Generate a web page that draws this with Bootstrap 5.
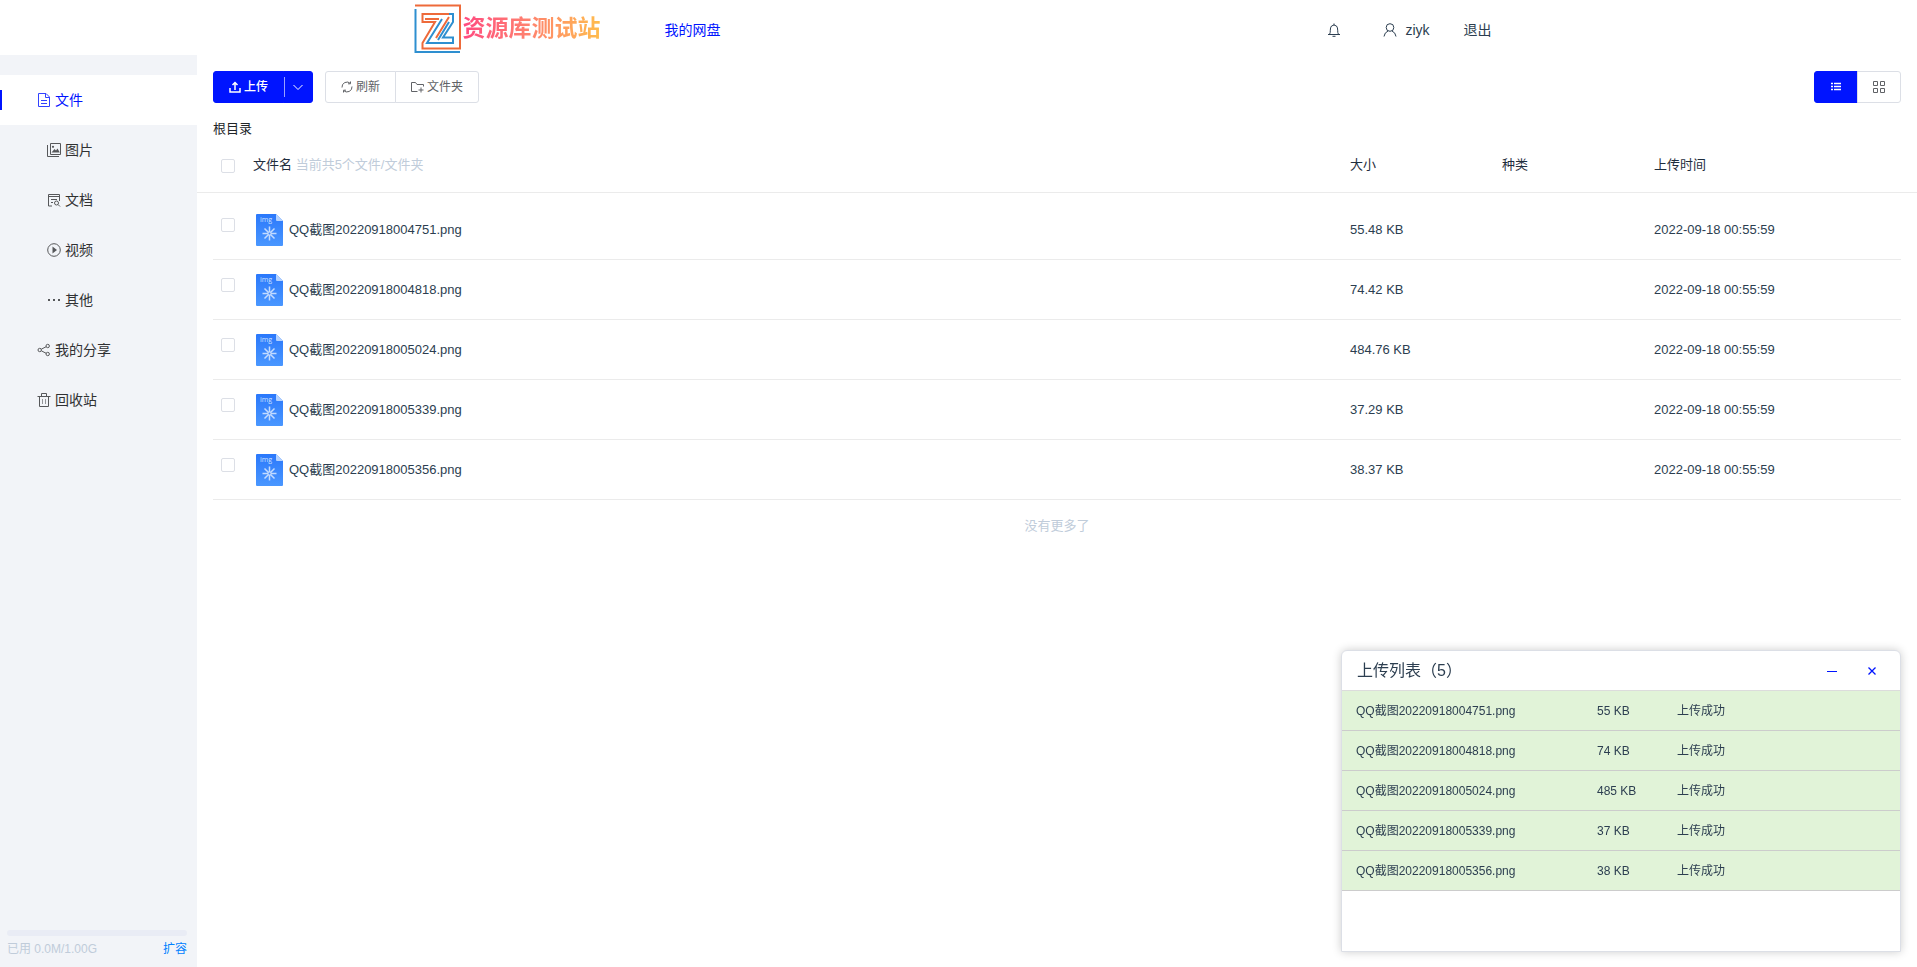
<!DOCTYPE html>
<html lang="zh-CN">
<head>
<meta charset="utf-8">
<meta name="viewport" content="width=device-width, initial-scale=1">
<title>我的网盘</title>
<link href="https://cdn.jsdelivr.net/npm/bootstrap@5.3.0/dist/css/bootstrap.min.css" rel="stylesheet">
<style>
  body { font-family: "Liberation Sans", "Noto Sans CJK SC", sans-serif; font-size: 13px; line-height: 20px; color: #2c3e50; background: #fff; }
  a { color: inherit; text-decoration: none; }
  svg { display: block; flex: none; fill: none; stroke: currentColor; }
  .topbar { height: 55px; }
  .topbar-inner { width: 100%; max-width: 1090px; font-size: 14px; }
  .brand-text { font-size: 23px; line-height: 32px; font-weight: 700; background: linear-gradient(90deg, #ff4a80, #ff7f70 45%, #ffbd4d); -webkit-background-clip: text; background-clip: text; color: transparent; }
  .accent { color: #0014ff; }
  .user-nav { gap: 34px; }
  .sidebar { width: 197px; background: #f2f4f8; flex: none; }
  .side-nav { padding-top: 20px; }
  .side-link { height: 50px; font-size: 14px; color: #303133; padding-left: 37px; gap: 4px; }
  .side-link svg { opacity: .8; }
  .side-link.sub { padding-left: 47px; }
  .side-link.active { background: #fff; color: #0014ff; position: relative; }
  .side-link.active::before { content: ""; position: absolute; left: 0; top: 15px; width: 2px; height: 20px; background: #0014ff; }
  .quota { padding: 0 10px 8px 7px; font-size: 12px; color: #c0ccda; }
  .quota .progress { height: 6px; background: #e9ecf5; margin-bottom: 3px; }
  .quota a { color: #0080ff; }
  .main { padding: 16px; min-width: 0; }
  .btn { font-size: 12px; line-height: 18px; border-radius: 3px; padding: 6px 15px; gap: 3px; }
  .btn-fill { background: #0014ff; color: #fff; border-color: #0014ff; font-weight: 500; }
  .btn-line { border-color: #dcdfe6; color: #606266; background: #fff; }
  .btn-split { position: relative; padding: 6px 9px; }
  .btn-split::before { content: ""; position: absolute; left: 0; top: 5px; bottom: 5px; width: 1px; background: #ffffff99; }
  .view-btn { width: 44px; height: 32px; padding: 0; }
  .crumb { font-size: 13px; color: #212529; margin-top: 16px; }
  .files { --bs-table-bg: transparent; color: #2c3e50; margin: 0; table-layout: fixed; border-collapse: separate; border-spacing: 0; }
  .files th { position: relative; font-weight: 400; color: #1f2d3d; border: 0; padding: 16px 0 18px; vertical-align: top; }
  .files th::after { content: ""; position: absolute; left: -16px; right: -16px; bottom: 0; height: 1px; background: #ebebeb; }
  .files td { height: 60px; padding: 0; vertical-align: middle; border-bottom: 1px solid #ebebeb; }
  .files tbody tr:first-child td { height: 67px; padding-top: 7px; }
  .files .form-check-input { width: 14px; height: 14px; border: 1px solid #dcdfe6; border-radius: 2px; margin: 4px 0 0 8px; display: block; }
  .files td .form-check-input { margin: 0 0 9px 8px; }
  .file-icon { width: 27px; height: 32px; margin: 0 6px 0 3px; }
  .c-check { width: 40px; } .c-size, .c-kind { width: 152px; } .c-time { width: 247px; }
  .hint { color: #c0ccda; }
  .uploads { position: fixed; right: 16px; bottom: 15px; width: 560px; max-width: 95vw; height: 302px; border: 1px solid #dcdfe6; border-radius: 6px 6px 0 0; background: #fff; box-shadow: 0 0 10px #0003; overflow: hidden; }
  .uploads-head { height: 39px; padding: 0 8px 0 15px; font-size: 16px; }
  .uploads-head button { width: 40px; height: 30px; padding: 0; border: 0; background: none; color: #0014ff; display: flex; align-items: center; justify-content: center; }
  .uploads table { width: 100%; table-layout: fixed; font-size: 12px; border-collapse: separate; border-spacing: 0; border-top: 1px solid #dcdcdc; }
  .uploads td { height: 40px; padding: 0; background: #e1f3d8; border-bottom: 1px solid #ccc; }
  .uploads td:first-child { padding-left: 14px; width: 255px; }
  .uploads td:nth-child(2) { width: 80px; }
</style>
</head>
<body>
<svg width="0" height="0" class="position-absolute" aria-hidden="true">
  <defs>
    <linearGradient id="sheet" x1="0" y1="0" x2="0" y2="1"><stop offset="0" stop-color="#2a78fb"/><stop offset="1" stop-color="#4a97ff"/></linearGradient>
    <symbol id="img-file" viewBox="0 0 27 32">
      <path d="M1 0H20L27 7V31Q27 32 26 32H1Q0 32 0 31V1Q0 0 1 0Z" fill="url(#sheet)" stroke="none"/>
      <path d="M20 0L27 7H21Q20 7 20 6Z" fill="#b5d3ff" stroke="none"/>
      <path d="M13.500 12.500V26.500M6.500 19.500H20.500M8.500 14.500L18.500 24.500M18.500 14.500L8.500 24.500" stroke="#c2dbff" stroke-width="1.500"/>
      <circle cx="13.500" cy="19.500" r="1" fill="#4089fd" stroke="none"/>
      <text x="4" y="8" font-family="Open Sans, sans-serif" font-size="7" fill="#cfe2ff" stroke="none">img</text>
    </symbol>
  </defs>
</svg>
<div class="d-flex flex-column min-vh-100">
  <header class="topbar d-flex justify-content-center">
    <div class="topbar-inner d-flex align-items-center">
      <a href="#" class="d-flex align-items-center">
        <svg width="49" height="55" viewBox="0 0 49 55" stroke-width="2">
          <path d="M1 5.500H46V48.500H8.500V43L21 22H8.500V14H35" stroke="#ee6a3a"/>
          <path d="M1.500 9V52H46M35 14H39V22L29 37.500H39V43H13L28 19" stroke="#2e8fd0"/>
          <path d="M11 19H25M35 17L22 38" stroke="#ee6a3a"/>
          <path d="M35 22L24 40" stroke="#2e8fd0"/>
        </svg>
        <span class="brand-text">资源库测试站</span>
      </a>
      <a href="#" class="accent ms-5 ps-3 mt-1">我的网盘</a>
      <nav class="user-nav ms-auto d-flex align-items-center mt-1 pe-2 me-1">
        <a href="#" class="me-2" aria-label="通知"><svg width="14" height="14" viewBox="0 0 14 14"><path d="M1 11.500H13M2.500 11.500C4 9.500 2.500 5 4.500 3Q7 1 9.500 3C11.500 5 10 9.500 11.500 11.500M7 .5V2M5.500 13.300H8.500"/></svg></a>
        <a href="#" class="d-flex align-items-center gap-2"><svg width="14" height="14" viewBox="0 0 14 14"><circle cx="7" cy="4.500" r="3.800"/><path d="M1 13.500Q1.500 9.500 5 8M13 13.500Q12.500 9.500 9 8"/></svg><span>ziyk</span></a>
        <a href="#">退出</a>
      </nav>
    </div>
  </header>
  <div class="d-flex flex-grow-1">
    <aside class="sidebar d-flex flex-column">
      <nav class="side-nav d-flex flex-column">
        <a href="#" class="side-link active d-flex align-items-center"><svg width="14" height="14" viewBox="0 0 14 14"><path d="M1.500 .5H9L12.500 4V13.500H1.500ZM8.500 .5V4.500H12.500M4 7.500H10M4 10.500H10"/></svg>文件</a>
        <a href="#" class="side-link sub d-flex align-items-center"><svg width="14" height="14" viewBox="0 0 14 14"><path d="M3.500 .5H13.500V11.500H3.500ZM.5 2V13.500H12"/><path d="M4.500 9.500L7.500 6L9 7.500L10.500 5.500L12.800 9.500Z" fill="currentColor" stroke="none"/><circle cx="6" cy="3.800" r="1.100" fill="currentColor" stroke="none"/></svg>图片</a>
        <a href="#" class="side-link sub d-flex align-items-center"><svg width="14" height="14" viewBox="0 0 14 14"><path d="M5 13H1.500V1.500H12.500V8M1.500 3.500H12.500M4 6.500H10M4 9.500H6"/><circle cx="9.500" cy="10" r="2"/><path d="M11 11.500L13 13.500"/></svg>文档</a>
        <a href="#" class="side-link sub d-flex align-items-center"><svg width="14" height="14" viewBox="0 0 14 14"><circle cx="7" cy="7" r="6.300"/><path d="M5.500 3.500L10 7L5.500 10.500Z" fill="currentColor" stroke="none"/></svg>视频</a>
        <a href="#" class="side-link sub d-flex align-items-center"><svg width="14" height="14" viewBox="0 0 14 14"><path d="M1 6H3V8H1ZM6 6H8V8H6ZM11 6H13V8H11Z" fill="currentColor" stroke="none"/></svg>其他</a>
        <a href="#" class="side-link d-flex align-items-center"><svg width="14" height="14" viewBox="0 0 14 14"><circle cx="2.700" cy="7" r="1.700"/><circle cx="10.700" cy="3" r="1.700"/><circle cx="10.700" cy="11" r="1.700"/><path d="M4.300 6.200L9.200 3.700M4.300 7.800L9.200 10.300"/></svg>我的分享</a>
        <a href="#" class="side-link d-flex align-items-center"><svg width="14" height="14" viewBox="0 0 14 14"><path d="M.5 3.500H13.500M4.500 3V.5H9.500V3M2.500 3.500V13.500H11.500V3.500"/><path d="M5.500 6V11M8.500 6V11" stroke-opacity=".6"/></svg>回收站</a>
      </nav>
      <div class="quota mt-auto">
        <div class="progress" role="progressbar" aria-label="已用空间" aria-valuenow="0" aria-valuemin="0" aria-valuemax="100"></div>
        <div class="d-flex justify-content-between"><span>已用 0.0M/1.00G</span><a href="#">扩容</a></div>
      </div>
    </aside>
    <main class="main flex-grow-1">
      <div class="d-flex align-items-start justify-content-between">
        <div class="d-flex gap-2">
          <div class="btn-group me-1">
            <button type="button" class="btn btn-fill d-flex align-items-center"><svg width="12" height="12" viewBox="0 0 12 12" stroke-width="1.500"><path d="M1 7V11H11V7M6 9V1.500M3.500 4L6 1.500L8.500 4"/></svg>上传</button>
            <button type="button" class="btn btn-fill btn-split d-flex align-items-center" aria-label="更多上传方式"><svg width="10" height="10" viewBox="0 0 10 10"><path d="M.5 3L5 7.500L9.500 3"/></svg></button>
          </div>
          <div class="btn-group">
            <button type="button" class="btn btn-line d-flex align-items-center"><svg width="12" height="12" viewBox="0 0 12 12"><path d="M1 6.500A5 5 0 0 1 9.500 2.500V.5M11 5.500A5 5 0 0 1 2.500 9.500V11.500M9.500 2.800H7M2.500 9.200H5"/></svg>刷新</button>
            <button type="button" class="btn btn-line d-flex align-items-center"><svg width="13" height="12" viewBox="0 0 13 12"><path d="M6.500 10.500H.5V1.500H4.500L6 3.500H12.500V5.500M10 6.500V11.500M7.500 9H12.500"/></svg>文件夹</button>
          </div>
        </div>
        <div class="btn-group">
          <button type="button" class="btn view-btn btn-fill d-flex align-items-center justify-content-center" aria-label="列表"><svg width="10" height="10" viewBox="0 0 10 10"><path d="M0 1.500H2M3 1.500H10M0 4.500H2M3 4.500H10M0 7.500H2M3 7.500H10" stroke-width="1.500"/></svg></button>
          <button type="button" class="btn view-btn btn-line d-flex align-items-center justify-content-center" aria-label="网格"><svg width="12" height="12" viewBox="0 0 12 12" stroke="#909399"><path d="M.5 .5H4.500V4.500H.5ZM7.500 .5H11.500V4.500H7.500ZM.5 7.500H4.500V11.500H.5ZM7.500 7.500H11.500V11.500H7.500Z"/></svg></button>
        </div>
      </div>
      <div class="crumb">根目录</div>
      <table class="table files">
        <colgroup><col class="c-check"><col><col class="c-size"><col class="c-kind"><col class="c-time"></colgroup>
        <thead><tr><th><input class="form-check-input" type="checkbox" aria-label="全选"></th><th>文件名 <span class="hint">当前共5个文件/文件夹</span></th><th>大小</th><th>种类</th><th>上传时间</th></tr></thead>
        <tbody>
          <tr><td><input class="form-check-input" type="checkbox" id="f1"></td><td><label for="f1" class="d-flex align-items-center"><svg class="file-icon"><use href="#img-file"/></svg>QQ截图20220918004751.png</label></td><td>55.48 KB</td><td></td><td>2022-09-18 00:55:59</td></tr>
          <tr><td><input class="form-check-input" type="checkbox" id="f2"></td><td><label for="f2" class="d-flex align-items-center"><svg class="file-icon"><use href="#img-file"/></svg>QQ截图20220918004818.png</label></td><td>74.42 KB</td><td></td><td>2022-09-18 00:55:59</td></tr>
          <tr><td><input class="form-check-input" type="checkbox" id="f3"></td><td><label for="f3" class="d-flex align-items-center"><svg class="file-icon"><use href="#img-file"/></svg>QQ截图20220918005024.png</label></td><td>484.76 KB</td><td></td><td>2022-09-18 00:55:59</td></tr>
          <tr><td><input class="form-check-input" type="checkbox" id="f4"></td><td><label for="f4" class="d-flex align-items-center"><svg class="file-icon"><use href="#img-file"/></svg>QQ截图20220918005339.png</label></td><td>37.29 KB</td><td></td><td>2022-09-18 00:55:59</td></tr>
          <tr><td><input class="form-check-input" type="checkbox" id="f5"></td><td><label for="f5" class="d-flex align-items-center"><svg class="file-icon"><use href="#img-file"/></svg>QQ截图20220918005356.png</label></td><td>38.37 KB</td><td></td><td>2022-09-18 00:55:59</td></tr>
        </tbody>
      </table>
      <div class="hint text-center pt-3">没有更多了</div>
    </main>
  </div>
</div>
<section class="uploads">
  <div class="uploads-head d-flex align-items-center">
    <span class="me-auto">上传列表（5）</span>
    <button type="button" aria-label="最小化"><svg width="10" height="10" viewBox="0 0 10 10"><path d="M0 5.500H10"/></svg></button>
    <button type="button" aria-label="关闭"><svg width="8" height="8" viewBox="0 0 8 8"><path d="M.5 .5L7.500 7.500M7.500 .5L.5 7.500" stroke-width="1.300"/></svg></button>
  </div>
  <table>
    <tr><td>QQ截图20220918004751.png</td><td>55 KB</td><td>上传成功</td></tr>
    <tr><td>QQ截图20220918004818.png</td><td>74 KB</td><td>上传成功</td></tr>
    <tr><td>QQ截图20220918005024.png</td><td>485 KB</td><td>上传成功</td></tr>
    <tr><td>QQ截图20220918005339.png</td><td>37 KB</td><td>上传成功</td></tr>
    <tr><td>QQ截图20220918005356.png</td><td>38 KB</td><td>上传成功</td></tr>
  </table>
</section>
<script src="https://cdn.jsdelivr.net/npm/bootstrap@5.3.0/dist/js/bootstrap.bundle.min.js"></script>
</body>
</html>
